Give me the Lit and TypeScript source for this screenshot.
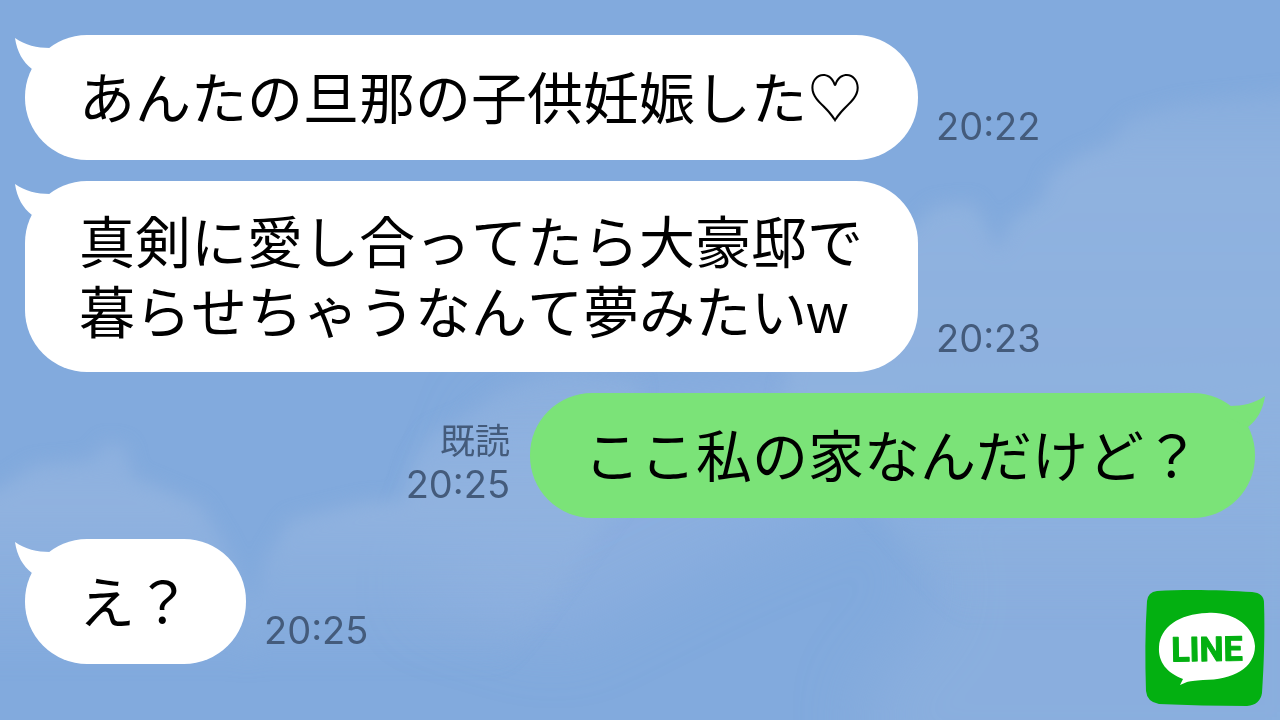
import { LitElement, html, css, svg } from "lit";
import { customElement, property } from "lit/decorators.js";

interface Message {
  lines: string[];
  time: string;
  own?: boolean;
  read?: boolean;
}

const MESSAGES: Message[] = [
  { lines: ["あんたの旦那の子供妊娠した♡"], time: "20:22" },
  { lines: ["真剣に愛し合ってたら大豪邸で", "暮らせちゃうなんて夢みたいw"], time: "20:23" },
  { lines: ["ここ私の家なんだけど？"], time: "20:25", own: true, read: true },
  { lines: ["え？"], time: "20:25" },
];

@customElement("chat-message")
export class ChatMessage extends LitElement {
  @property({ attribute: false }) message!: Message;
  @property({ type: Boolean, reflect: true }) own = false;

  static styles = css`
    :host {
      display: flex;
      align-items: flex-end;
      gap: 18px;
    }
    :host([own]) {
      flex-direction: row-reverse;
      gap: 20px;
    }
    .bubble {
      position: relative;
      box-sizing: border-box;
      min-height: 125px;
      padding: 28px 55px 23px 54px;
      border-radius: 62px;
      background: #fff;
      color: #000;
      display: flex;
      flex-direction: column;
      justify-content: center;
    }
    .text {
      margin: 0;
      font-size: 56px;
      line-height: 70px;
      font-kerning: none;
    }
    .tail {
      position: absolute;
      top: 3px;
      left: -10px;
      width: 40px;
      height: 32px;
      fill: #fff;
    }
    :host([own]) .bubble {
      background: #7be378;
    }
    :host([own]) .tail {
      left: auto;
      right: -10px;
      transform: scaleX(-1);
      fill: #7be378;
    }
    .meta {
      display: flex;
      flex-direction: column;
      align-items: flex-end;
      padding-bottom: 12px;
      color: #445b7b;
      font-size: 38px;
      line-height: 43px;
    }
    .read {
      font-size: 35px;
    }
    time {
      font-family: Inter, "Noto Sans CJK JP", sans-serif;
    }
  `;

  render() {
    const m = this.message;
    return html`
      <div class="bubble">
        <svg class="tail" viewBox="0 0 40 32" aria-hidden="true">
          <path d="M0 0C10 7 22 10 35 10L40 20L17 31C8 24 2 14 0 0Z" />
        </svg>
        ${m.lines.map((line) => html`<p class="text">${line}</p>`)}
      </div>
      <div class="meta">
        ${m.read ? html`<span class="read">既読</span>` : null}
        <time>${m.time}</time>
      </div>
    `;
  }
}

@customElement("app-root")
export class AppRoot extends LitElement {
  static styles = css`
    :host {
      display: block;
      position: relative;
      box-sizing: border-box;
      min-height: 100vh;
      padding: 35px 25px;
      overflow: hidden;
      background: #82aadd;
      font-family: "Liberation Sans", "Noto Sans CJK JP", sans-serif;
    }
    .sky {
      position: absolute;
      inset: 0;
      width: 100%;
      height: 100%;
    }
    .chat {
      position: relative;
      display: flex;
      flex-direction: column;
      gap: 21px;
    }
    .logo {
      position: absolute;
      right: 15px;
      bottom: 13px;
      width: 120px;
      height: 118px;
    }
    .word {
      font-family: Roboto, sans-serif;
      font-weight: 700;
      font-size: 34px;
    }
  `;

  private sky() {
    return svg`
      <defs>
        <linearGradient id="right" gradientUnits="userSpaceOnUse" x1="0" y1="80" x2="0" y2="620">
          <stop offset="0" stop-color="#91b3df" stop-opacity=".3" />
          <stop offset=".15" stop-color="#91b3df" stop-opacity=".85" />
          <stop offset=".6" stop-color="#8fb2df" stop-opacity=".9" />
          <stop offset="1" stop-color="#8fb2df" stop-opacity="0" />
        </linearGradient>
        <linearGradient id="left" gradientUnits="userSpaceOnUse" x1="0" y1="370" x2="0" y2="670">
          <stop offset="0" stop-color="#90b2df" stop-opacity=".5" />
          <stop offset=".45" stop-color="#90b2df" />
          <stop offset="1" stop-color="#90b2df" stop-opacity="0" />
        </linearGradient>
        <filter id="edge" x="-20%" y="-20%" width="140%" height="140%"><feGaussianBlur stdDeviation="9" /></filter>
        <filter id="haze" x="-50%" y="-50%" width="200%" height="200%"><feGaussianBlur stdDeviation="32" /></filter>
      </defs>
      <g filter="url(#haze)" fill="#8fb1df">
        <path opacity=".65" d="M900 480L1340 380V780H880L860 700L940 600Z" />
        <path opacity=".7" d="M500 400L900 360L860 500L720 560L560 640L420 600Z" />
      </g>
      <g filter="url(#edge)">
        <path fill="url(#right)" d="M800 300L910 230L935 206L972 202L985 222L998 252L1010 222L1042 200L1050 176L1078 156L1108 144L1130 118L1180 103L1320 88V640H980L850 480L780 420Z" />
        <path fill="url(#left)" d="M-30 500L0 488L35 465L92 460L106 442L126 446L132 476L200 505L225 545L260 620L250 700L-30 700Z" />
        <path fill="url(#left)" d="M265 560L290 520L365 502L402 500L412 462L432 432L465 418L500 392L560 370L640 380L620 500L480 700H230L250 620Z" />
      </g>`;
  }

  render() {
    return html`
      <svg class="sky" viewBox="0 0 1280 720" preserveAspectRatio="none" aria-hidden="true">${this.sky()}</svg>
      <main class="chat">
        ${MESSAGES.map((m) => html`<chat-message .message=${m} ?own=${m.own}></chat-message>`)}
      </main>
      <svg class="logo" viewBox="0 0 120 118" role="img" aria-label="LINE">
        <path fill="#03b011" d="M12 2C40 0 80 1 107 3Q119 4 119 14C120 42 119 75 117 104Q115 116 102 117C72 117 42 116 14 115Q2 113 1 102C0 72 0 42 2 12Q3 3 12 2Z" />
        <path fill="#fff" d="M62 24C88 22 109 37 110 57C110 79 88 91 58 91C50 92 44 92 42 93L35 96L38 90C22 84 13 73 14 58C15 38 34 25 62 24Z" />
        <text class="word" x="62" y="72" text-anchor="middle" fill="#03b011" stroke="#03b011" stroke-width="1" stroke-linejoin="round" transform="rotate(-1 62 60)">LINE</text>
      </svg>
    `;
  }
}
